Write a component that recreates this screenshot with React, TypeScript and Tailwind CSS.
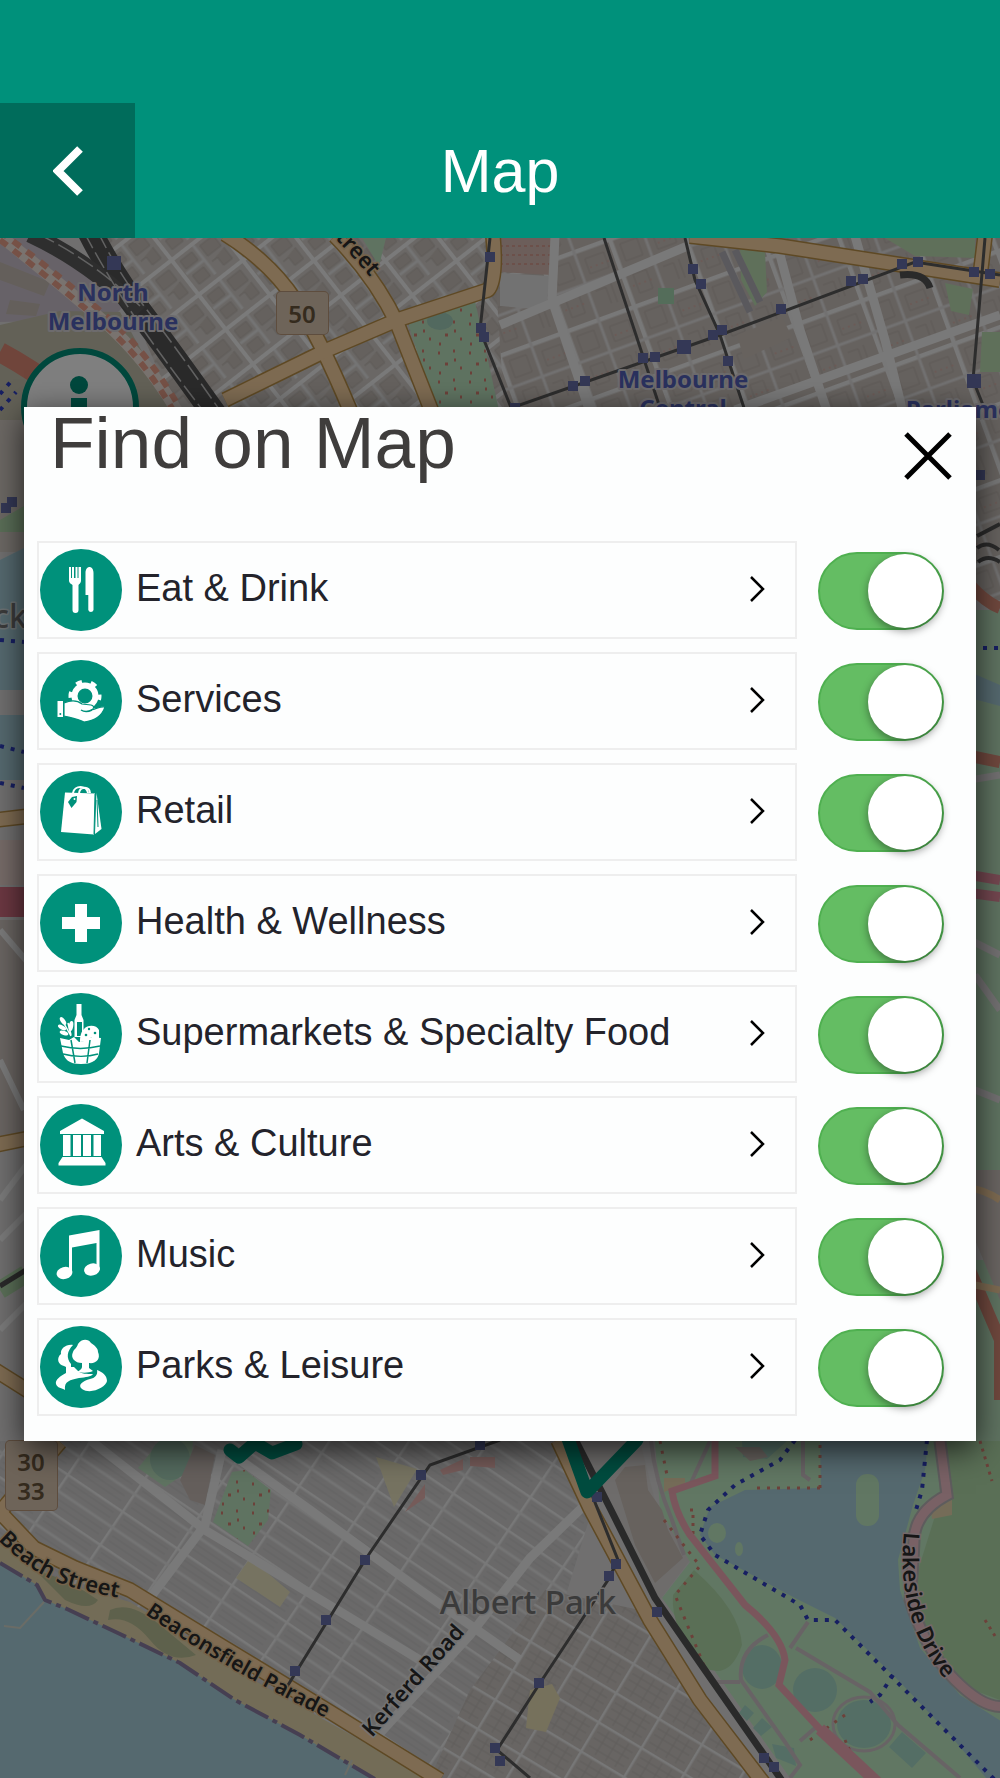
import { useState } from 'react';
import type { ReactNode } from 'react';

interface Category {
  id: string;
  label: string;
  icon: ReactNode;
}

const GREEN = '#00917b';

const categories: Category[] = [
  {
    id: 'eat',
    label: 'Eat & Drink',
    icon: (
      <>
        <path d="M29 18h2v11h1V18h2v11h1.500V18h2v11h1V18h2.500v14c0 2-2 3-2.500 4v25a2.800 2.800 0 0 1-6 0V36c-1-1-3.500-2-3.500-4z" />
        <path d="M45.500 46V24c0-8 8-8 8 0v37a2.700 2.700 0 0 1-5.200 0V46z" />
      </>
    ),
  },
  {
    id: 'services',
    label: 'Services',
    icon: (
      <>
        <circle cx="45" cy="36" r="10.500" fill="none" stroke="#fff" strokeWidth="6" />
        <circle cx="45" cy="36" r="14.500" fill="none" stroke="#fff" strokeWidth="4" strokeDasharray="6 9.180" strokeDashoffset="2" />
        <path d="M24 43c7-3 13-3 18 1l9 1c4 1 3 4 0 5 6-1 9-4 14-3-3 9-11 14-21 15-6-3-12-4-20-6z" stroke={GREEN} strokeWidth="1.200" />
        <path d="M41 50c3 2 7 2 11 0" fill="none" stroke={GREEN} strokeWidth="1.500" />
        <path d="M17.500 41h5.500v16h-5.500z" />
        <circle cx="20.300" cy="54" r="1" fill={GREEN} />
      </>
    ),
  },
  {
    id: 'retail',
    label: 'Retail',
    icon: (
      <>
        <path d="M33 22c1-8 14-8 15 0M39 22c1-7 11-7 11 0" fill="none" stroke="#fff" strokeWidth="2" />
        <path d="M25 21.500l30 1-1 41-33-2.500z" />
        <path d="M56.500 22l5 36-6.500 5z" />
        <path d="M57 29l1 27M55 23l-1 40" fill="none" stroke={GREEN} strokeWidth="1" />
        <path d="M28 31l4-5 5-1-.5 6-5 6z" fill={GREEN} />
        <circle cx="34.500" cy="28" r="1" />
      </>
    ),
  },
  {
    id: 'health',
    label: 'Health & Wellness',
    icon: <path d="M35 22h12v13h13v12H47v13H35V47H22V35h13z" />,
  },
  {
    id: 'food',
    label: 'Supermarkets & Specialty Food',
    icon: (
      <>
        <path d="M36.500 11h5v11l2 5v17h-9V27l2-5z" />
        <path d="M37 29h5v14h-5z" fill={GREEN} />
        <path d="M44 36c4-5 13-4 15 1v9l-19 3c0-6 1-10 4-13z" />
        <g fill={GREEN}>
          <circle cx="49" cy="36" r="1.200" />
          <circle cx="55" cy="40" r="1.300" />
          <circle cx="46" cy="42" r="1.300" />
          <circle cx="51" cy="45" r="1" />
        </g>
        <path d="M31 43L22 27M31 42l-3-12" fill="none" stroke="#fff" strokeWidth="1.500" />
        <ellipse cx="23" cy="28" rx="2.200" ry="4.500" transform="rotate(-35 23 28)" />
        <ellipse cx="22" cy="34.500" rx="2" ry="4.500" transform="rotate(-60 22 34.500)" />
        <ellipse cx="24" cy="40" rx="2" ry="4.500" transform="rotate(-70 24 40)" />
        <ellipse cx="31" cy="33" rx="2.200" ry="5" transform="rotate(10 31 33)" />
        <path d="M20 45l9 2 5-3 5 5 5-1 5-4 12 1-2 15c-1 6-5 11-18 11S25 66 23 60z" />
        <path d="M21 53c12 3 27 3 39 0M23 61c11 3 25 3 35 0M31 47l4 23M50 47l-3 23" fill="none" stroke={GREEN} strokeWidth="1.500" />
      </>
    ),
  },
  {
    id: 'arts',
    label: 'Arts & Culture',
    icon: (
      <path d="M42 14.500L64 27v3H20v-3zM23 31h7.500v21H23zM33 31h8v21h-8zM43 31h8v21h-8zM53.500 31h7.500v21h-7.500zM22.500 53h39l4 6v2.500h-47V59z" />
    ),
  },
  {
    id: 'music',
    label: 'Music',
    icon: (
      <>
        <path d="M29 20.500l30.500-5.500v40h-3V28L32 32.500V58h-3z" />
        <ellipse cx="24.500" cy="58" rx="8" ry="6" transform="rotate(-15 24.500 58)" />
        <ellipse cx="52" cy="54.500" rx="8" ry="6" transform="rotate(-15 52 54.500)" />
      </>
    ),
  },
  {
    id: 'parks',
    label: 'Parks & Leisure',
    icon: (
      <>
        <path d="M33 19c-7-1-13 4-12 9-5 4-3 11 3 12l2 1v6c-6 3-11 7-10 11 1 4 6 4 9 6-1-9 5-10 14-12 7-1 12-1 14-4-6 0-12 0-15-3l-4-4h-3v-3c-5-6-4-13 2-19z" />
        <path d="M33 26c1-3 4-4 5-8 3-5 10-6 13-1 4 3 7 5 7 9 3 7-2 12-9 11v5l4 3c-4 2-10 2-16 1 3-2 5-3 5-5v-4c-7 0-12-5-9-11z" />
        <path d="M57 44c1 5-2 8-7 9-7 2-13 6-8 10 9 6 24-2 25-8 0-6-5-9-10-11z" />
      </>
    ),
  },
];

const stops: [number, number][] = [
  [114, 263], [490, 257], [481, 328], [484, 337], [693, 269], [701, 284], [781, 309], [722, 330],
  [713, 335], [655, 357], [643, 358], [585, 381], [573, 386], [728, 361], [851, 281], [863, 279],
  [902, 264], [918, 262], [974, 272], [990, 274], [515, 408], [980, 475],
  [12, 502], [6, 508], [480, 1445], [421, 1475], [365, 1560], [326, 1620], [295, 1671], [597, 1497],
  [616, 1564], [609, 1576], [657, 1612], [539, 1683], [500, 1761], [764, 1758], [774, 1767], [495, 1748],
];

const trams = [
  'M490 238L480 330L520 430',
  'M604 238L664 420',
  'M685 238L695 280L720 335L748 420',
  'M500 412L720 335L915 262L1000 275',
  'M985 238L973 380L985 410',
  'M500 1440L430 1465L365 1560L285 1690',
  'M590 1490L618 1560L608 1580L540 1683L497 1750L530 1778',
];

const goldRoads = [
  'M225 234Q270 262 295 300T350 410',
  'M335 236Q375 277 397 323L432 412',
  'M225 400L327 350L397 320L488 290Q497 280 493 236',
  'M690 236L780 246L1000 280',
  'M985 236L980 276',
  'M-5 820L30 816M-5 1145L30 1138M-5 1370L30 1392',
  'M-5 1507L34 1548L75 1568L130 1590L220 1645L330 1712L440 1780',
  'M0 1512L60 1442',
  'M558 1440L590 1508L650 1620L700 1700L765 1785',
];

const bigStreets = [
  'M372 1742L470 1635L530 1558L592 1498',
  'M90 1440L205 1530L420 1660',
  'M240 1460L310 1510L420 1590L520 1660',
  'M222 1450L205 1525L150 1598',
  'M775 236L800 330L830 420',
  'M855 236L885 340L905 420',
  'M735 410L1000 315',
  'M555 236L552 300L590 412',
  'M500 325L690 245',
];

const dots = [
  'M795 1440L780 1460L735 1485L708 1510L700 1535L715 1555L800 1605L808 1620L835 1620L900 1685L950 1735L1000 1785',
  'M927 1440L922 1490L916 1510M893 1675L880 1695L870 1702',
  'M0 394L14 378M0 410L16 392',
  'M0 640L24 642M0 746L24 752M0 783L24 788M972 648L1000 648',
];

function StreetMap() {
  return (
    <svg
      className="absolute inset-0 h-full w-full"
      viewBox="0 238 1000 1540"
      preserveAspectRatio="xMidYMin slice"
      aria-hidden="true"
    >
      <defs>
        <pattern id="cbd" width="72" height="72" patternUnits="userSpaceOnUse" patternTransform="translate(607 238) rotate(-20)">
          <rect width="72" height="72" fill="#cdc4be" />
          <path d="M0 0V72M0 0H72" stroke="#f0f0f0" strokeWidth="9" />
          <path d="M36 0V72M0 36H72" stroke="#e4e2e2" strokeWidth="3" />
          <path d="M10 10h18v18h-18zM44 12h20v16h-20zM12 43h14v20h-14zM43 46h11v17M60 44v20" fill="none" stroke="#bdb4ae" />
          <path d="M8 54h22M46 22h20" stroke="#e0aaa0" strokeDasharray="2 4" />
        </pattern>
        <pattern id="north" width="56" height="44" patternUnits="userSpaceOnUse" patternTransform="translate(240 260) rotate(-38)">
          <rect width="56" height="44" fill="#d6d1cc" />
          <path d="M0 0V44M0 0H56" stroke="#f4f4f4" strokeWidth="8" />
          <path d="M28 4V40M5 22H28" stroke="#e8e8e8" strokeWidth="3" />
          <path d="M8 8h15v10h-15zM33 8h17v13h-17zM9 27h14v11h-14zM33 28h7v10h11v-14" fill="#cbc3bc" stroke="#bdb5b0" />
        </pattern>
        <pattern id="south" width="66" height="40" patternUnits="userSpaceOnUse" patternTransform="translate(90 1440) rotate(34)">
          <rect width="66" height="40" fill="#d4d3d3" />
          <path d="M0 0V40M0 0H66" stroke="#f0f0f0" strokeWidth="5" />
          <path d="M0 20H66" stroke="#e8e8e8" strokeWidth="3" />
          <path d="M6 7H60M6 13H60M6 27H60M6 33H60" stroke="#c8c7c7" strokeWidth="1" />
        </pattern>
        <pattern id="east" width="50" height="34" patternUnits="userSpaceOnUse" patternTransform="translate(530 1640) rotate(31)">
          <rect width="50" height="34" fill="#d0cbc7" />
          <path d="M0 0V34M0 0H50" stroke="#eee" strokeWidth="5" />
          <path d="M5 17H46M5 10H46M5 26H46M15 4V31M27 4V31M38 4V31" stroke="#c0bbb7" strokeWidth="1" />
        </pattern>
        <pattern id="trees" width="31" height="29" patternUnits="userSpaceOnUse">
          <path d="M4 5h2M19 3h2M11 16h3M26 20h2M5 25h2M20 12h2" stroke="#d98374" strokeWidth="3" />
        </pattern>
        <path id="beach" d="M-2 1540Q30 1572 60 1583T135 1600" />
        <path id="beacon" d="M145 1614Q200 1652 260 1684T355 1732" />
        <path id="kerferd" d="M372 1738L482 1614" />
        <path id="street" d="M326 230Q356 258 390 302" />
        <path id="lakeside" d="M904 1532Q898 1590 918 1636T985 1715" />
      </defs>

      {/* land */}
      <rect y="238" width="1000" height="1540" fill="#e0dfdf" />
      <path d="M100 238H500L520 420H180z" fill="url(#north)" />
      <path d="M493 238H1000V600H530L505 420z" fill="url(#cbd)" />
      <path d="M0 238H30L130 300L110 320L0 322z" fill="#cfc5d0" />
      <path d="M0 262l50 20-6 14-44-16zM10 300l30 4-4 12-30-2z" fill="#c8beb6" />
      <path d="M0 325L60 311L120 312L180 420H0z" fill="#c6c3ae" />
      <path d="M408 323L475 301L500 415H437zM362 238H386L379 266z" fill="#bfe6c3" />
      <path d="M408 323L475 301L500 415H437z" fill="url(#trees)" />
      <ellipse cx="440" cy="321" rx="13" ry="9" fill="#a5d2be" />
      <path d="M500 238H556L552 275L500 272z" fill="#d8bdb4" />
      <path d="M500 246H554M500 255H553M500 264H552" stroke="#d98374" strokeDasharray="3 3" />
      <path d="M500 273L550 276L546 310L500 306z" fill="#e4e4e4" />
      <path d="M740 244l25 8 2 40-12 14-14-26zM885 238h90v20l-60-2zM945 283l28 6-4 26-18-4zM982 332h18v40h-20z" fill="#bfe0b5" />
      <path d="M735 250l25 52M722 252l28 60" stroke="#b5b3bb" strokeWidth="7" />
      <path d="M737 335l45-18 10 20-48 22z" fill="#cfc5bd" />
      <path d="M658 288h16v16h-16z" fill="#a9dab5" />

      {/* strips left and right of the dialog */}
      <path d="M0 420H24V552H0z" fill="#d9d0c9" />
      <path d="M0 520l24-14v26H0z" fill="#b4dcae" />
      <path d="M0 560L24 548V690H0zM0 715H24V780H0z" fill="#aad3df" />
      <path d="M0 840H24V885H0z" fill="#edd6d0" />
      <path d="M0 887H26V917H0z" fill="#d97084" />
      <path d="M0 920H24V1140H0z" fill="#d4cbc5" />
      <path d="M0 930L30 965M0 1060L24 1110M0 1200L30 1160M0 1240L30 1210M0 1330L30 1300" stroke="#f6f6f6" strokeWidth="6" />
      <path d="M0 1290L26 1274" stroke="#b6e0b0" strokeWidth="18" />
      <path d="M0 1286L26 1270" stroke="#555" strokeWidth="5" />
      <path d="M970 610H1000V1170H970zM970 1260H1000V1450H970z" fill="#bfe6c3" />
      <path d="M970 672L1000 685V706L970 698z" fill="#aad3df" />
      <path d="M970 585Q985 602 1000 608M970 756L1000 762M970 1270L1000 1340V1400" fill="none" stroke="#e0907c" strokeWidth="12" />
      <path d="M970 875L1000 880M970 893L1000 897" stroke="#e88fa0" strokeWidth="10" />
      <path d="M970 780L1000 775M970 940L1000 955M975 975L1000 1010M975 1090L1000 1100" stroke="#e7e2e4" strokeWidth="7" />
      <path d="M975 1170H1000V1300L975 1240z" fill="#d4cbc5" />
      <path d="M970 1188Q985 1190 1000 1200M975 1285L1000 1290" fill="none" stroke="#fcd6a4" strokeWidth="7" />

      {/* south side */}
      <path d="M0 1441H560L592 1510L540 1680L500 1778H0z" fill="url(#south)" />
      <path d="M470 1690L545 1590L640 1610L765 1778H430z" fill="url(#east)" />
      <path d="M160 1441H193L190 1470L165 1487L138 1468zM232 1472L245 1470L271 1490L268 1520L248 1546L213 1522z" fill="#bfe6c3" />
      <path d="M232 1472L245 1470L271 1490L268 1520L248 1546L213 1522z" fill="url(#trees)" />
      <ellipse cx="170" cy="1459" rx="20" ry="21" fill="#a8d4bd" />
      <path d="M376 1457L417 1469L394 1507zM250 1558L290 1592L280 1607L236 1578z" fill="#ece7c3" />
      <path d="M440 1470L463 1459V1470L443 1475zM470 1457H495V1468L470 1466zM405 1512L425 1484V1498z" fill="#ebb7b3" />
      <path d="M195 1445L215 1455L205 1505L190 1500L180 1480z" fill="#cbbfb9" />
      <path d="M40 1690l22-6 8 14-14 34-20-4z" transform="translate(490 0)" fill="#ece2b8" />
      <path d="M0 1540L60 1582L130 1602L250 1678L440 1785H0z" fill="#e6d9ae" />
      <path d="M110 1610Q130 1600 160 1625T196 1655Q170 1665 150 1640T108 1620zM35 1570Q70 1580 98 1600Q90 1612 65 1600z" fill="#bcc298" />
      <path d="M0 1563L37 1585L45 1600L67 1609L120 1634L180 1663L235 1700L300 1735L385 1785H0z" fill="#aad3df" />
      <path d="M0 1563L37 1585L45 1600L67 1609L120 1634L180 1663L235 1700L300 1735L385 1785" fill="none" stroke="#8d7fa5" strokeWidth="4" strokeDasharray="26 5 5 5" />
      <path d="M4 1626L20 1628L44 1602M345 1775L352 1760" fill="none" stroke="#d5d8cd" strokeWidth="2" />

      {/* park and lake */}
      <path d="M580 1441L640 1441L655 1500L690 1560L660 1600L600 1490z" fill="#dcd9d7" />
      <path d="M655 1441H1000V1778H790L700 1650L662 1598L690 1562L660 1510z" fill="#c3eec6" />
      <path d="M615 1480L625 1467L645 1465L648 1490L662 1510L668 1530L683 1558L655 1583L635 1545z" fill="#cfc4bc" />
      <path d="M938 1441H1000V1700L960 1685L925 1640L915 1580L940 1500z" fill="#b4dfad" />
      <path d="M694 1570Q740 1610 742 1645Q730 1680 705 1668Q670 1630 673 1595z" fill="#b4dfad" />
      <path d="M820 1441L821 1488L745 1490L710 1507L700 1535L715 1555L795 1598L835 1618L900 1682L950 1735L992 1785H1010V1727L960 1695L920 1648L900 1590L898 1560L913 1505L925 1470L928 1441z" fill="#aad3df" />
      <rect x="856" y="1474" width="23" height="52" rx="11" fill="#c3eec6" />
      <ellipse cx="717" cy="1533" rx="9" ry="10" fill="#c3eec6" />
      <ellipse cx="739" cy="1549" rx="4" ry="7" fill="#c3eec6" />
      <g fill="#a9dccb">
        <ellipse cx="762" cy="1667" rx="20" ry="22" />
        <circle cx="815" cy="1690" r="22" />
        <ellipse cx="864" cy="1724" rx="27" ry="24" />
        <path d="M902 1732L926 1753L912 1768L889 1747zM745 1705l9 8-7 8-8-8zM762 1718l10 9-11 9-8-8zM772 1744l22 4 2 18-20-8zM742 1441h45l-20 18-24-2z" />
      </g>
      <path d="M735 1447h25l8 10-18 4z" fill="#cfc4bc" />
      <path d="M664 1478H685V1484L664 1492zM930 1505L952 1500V1515L932 1519z" fill="#ead9b0" />
      <path d="M768 1635Q738 1650 741 1680L785 1742L800 1765L790 1778M796 1648L870 1692L898 1725L960 1778M808 1622L790 1648M716 1682H740M800 1741L815 1728M651 1441Q655 1480 672 1520L684 1555M803 1441V1475L810 1480M710 1441L690 1485" fill="none" stroke="#d0c7ca" strokeWidth="4" />
      <ellipse cx="864" cy="1724" rx="31" ry="27" fill="none" stroke="#d0c7ca" strokeWidth="3" />
      <path d="M820 1488H750M820 1488V1441M664 1520L700 1566L675 1595L710 1680L735 1710M660 1441L668 1480M845 1715L810 1740" fill="none" stroke="#d98374" strokeWidth="3" strokeDasharray="3 7" />
      <path d="M690 1510h3v30M980 1441l12 40M845 1740l8 18M985 1620l10 16" fill="none" stroke="#d98374" strokeWidth="3" strokeDasharray="3 5" />

      {/* streets */}
      <g fill="none" stroke="#f2f2f2" strokeWidth="9">
        {bigStreets.map((d) => (
          <path key={d} d={d} />
        ))}
      </g>
      <path d="M0 352Q30 368 62 392" fill="none" stroke="#e08a77" strokeWidth="20" />
      <path d="M0 236Q50 275 100 318T185 425" fill="none" stroke="#f3e6df" strokeWidth="12" />
      <path d="M0 240Q50 278 100 321T181 425" fill="none" stroke="#eda28c" strokeWidth="6" strokeDasharray="9 8" />
      <path d="M6 236Q54 271 104 314T189 425" fill="none" stroke="#eda28c" strokeWidth="6" strokeDasharray="9 8" strokeDashoffset="8" />
      <path d="M90 232Q112 275 140 312T222 425" fill="none" stroke="#545454" strokeWidth="25" />
      <path d="M30 234Q90 262 140 312" fill="none" stroke="#5c5c5c" strokeWidth="17" />
      <path d="M84 232Q108 277 134 316T214 425M98 232Q118 273 147 310T230 425M38 234Q92 260 140 306" fill="none" stroke="#c4c4c4" strokeWidth="1.500" strokeDasharray="18 5" />
      <g fill="none" strokeLinejoin="round">
        {goldRoads.map((d) => (
          <path key={d} d={d} stroke="#bd9249" strokeWidth="16" />
        ))}
        {goldRoads.map((d) => (
          <path key={d} d={d} stroke="#fcd6a4" strokeWidth="13" />
        ))}
      </g>
      <path d="M715 1441V1476L672 1491Q675 1512 690 1535L745 1605Q782 1635 785 1660L779 1685L830 1740L880 1785" fill="none" stroke="#f5acb9" strokeWidth="7" />
      <path d="M820 1729L880 1785" stroke="#f5acb9" strokeWidth="12" />
      <path d="M940 1441L947 1495Q915 1512 914 1540T910 1600Q925 1650 955 1680T1005 1706" fill="none" stroke="#bcb8ba" strokeWidth="13" />
      <path d="M940 1441L947 1495Q915 1512 914 1540T910 1600Q925 1650 955 1680T1005 1706" fill="none" stroke="#f3c2cb" strokeWidth="9" />
      <path d="M576 1441L612 1512L655 1598L700 1663L785 1785" fill="none" stroke="#555" strokeWidth="7" />
      <g fill="none" stroke="#5a5a5a" strokeWidth="3">
        {trams.map((d) => (
          <path key={d} d={d} />
        ))}
      </g>
      <path d="M900 275Q925 272 930 288" fill="none" stroke="#555" strokeWidth="7" />
      <path d="M977 548q10-8 22 2M978 562q10-8 22 0M977 536L1000 524" fill="none" stroke="#555" strokeWidth="4" />
      <g fill="none" stroke="#2f3fc4" strokeWidth="4" strokeDasharray="4 7">
        {dots.map((d) => (
          <path key={d} d={d} />
        ))}
      </g>
      <g fill="#6870ad">
        {stops.map(([x, y]) => (
          <rect key={`${x}-${y}`} x={x - 5} y={y - 5} width="10" height="10" />
        ))}
        <rect x="107" y="256" width="14" height="14" />
        <rect x="677" y="340" width="14" height="14" />
        <rect x="967" y="374" width="14" height="14" />
      </g>

      {/* trail outline */}
      <g fill="none" stroke="#00997f" strokeWidth="13" strokeLinejoin="round" strokeLinecap="round">
        <path d="M567 1436L587 1492L637 1440" />
        <path d="M230 1450L239 1457L255 1443L272 1453L296 1444" />
      </g>

      {/* labels */}
      <g fontFamily="'Noto Sans', sans-serif" textAnchor="middle" paintOrder="stroke" strokeLinejoin="round">
        <g fontSize="24" fontWeight="700" fill="#5563bd" stroke="#dad7da" strokeWidth="4">
          <text x="113" y="301">North</text>
          <text x="113" y="330">Melbourne</text>
          <text x="683" y="388">Melbourne</text>
          <text x="683" y="417">Central</text>
          <text x="972" y="418">Parliament</text>
        </g>
        <g fill="#dcc8b2" stroke="#bd9a7c" strokeWidth="2">
          <rect x="277" y="292" width="51" height="42" rx="4" />
          <rect x="6" y="1441" width="51" height="69" rx="4" />
        </g>
        <g fontSize="24" fontWeight="600" fill="#6a563c">
          <text x="302" y="323">50</text>
          <text x="31" y="1471">30</text>
          <text x="31" y="1500">33</text>
        </g>
        <text x="528" y="1614" fontSize="33" fontWeight="500" fill="#777" stroke="#e0dfdf" strokeWidth="3">Albert Park</text>
        <text x="10" y="628" fontSize="32" fontWeight="500" fill="#777" stroke="#d7e3e6" strokeWidth="3">ck</text>
      </g>
      <g fontFamily="'Noto Sans', sans-serif" fontSize="22" fontWeight="600" fill="#2c2c2c" paintOrder="stroke" stroke="#eac796" strokeWidth="3">
        <text><textPath href="#beach">Beach Street</textPath></text>
        <text fontSize="21"><textPath href="#beacon">Beaconsfield Parade</textPath></text>
        <text><textPath href="#street">Street</textPath></text>
        <text stroke="#e6e6e6"><textPath href="#kerferd">Kerferd Road</textPath></text>
        <text stroke="#e8cfd3"><textPath href="#lakeside">Lakeside Drive</textPath></text>
      </g>
    </svg>
  );
}

export default function App() {
  const [enabled, setEnabled] = useState<Record<string, boolean>>(
    Object.fromEntries(categories.map((c) => [c.id, true]))
  );
  const [isOpen, setIsOpen] = useState(true);

  const toggle = (id: string) => {
    setEnabled((prev) => ({ ...prev, [id]: !prev[id] }));
  };

  return (
    <div className="flex min-h-screen flex-col font-['Liberation_Sans',sans-serif]">
      <header className="grid grid-cols-[135px_1fr_135px] bg-[#00917b] pt-[103px]">
        <button aria-label="Back" className="flex h-[135px] items-center justify-center bg-[#006c5b]">
          <svg width="30" height="50" viewBox="0 0 30 50" fill="none">
            <path d="M27 3L5 25L27 47" stroke="#fff" strokeWidth="8" />
          </svg>
        </button>
        <h1 className="self-center pt-0.5 text-center text-[61px] leading-none text-white">Map</h1>
      </header>

      <main className="relative flex-1 overflow-hidden">
        <StreetMap />
        <button
          aria-label="Information"
          className="absolute top-[110px] left-[21px] flex h-[118px] w-[118px] items-start justify-center rounded-full border-[6px] border-[#00917b] bg-white pt-[22px]"
        >
          <svg width="20" height="70" viewBox="0 0 20 70" fill="#00917b">
            <circle cx="9" cy="9" r="9" />
            <path d="M1 22h16v40H1z" />
          </svg>
        </button>
        <div className="absolute inset-0 bg-black/50" />

        {isOpen && (
          <section
            role="dialog"
            aria-labelledby="dialog-title"
            className="relative mx-6 mt-[169px] mb-12 bg-[#fdfefe] pb-[25px] shadow-[0_8px_30px_rgba(0,0,0,0.7)]"
          >
            <div className="flex h-[134px] items-start justify-between pr-5 pl-[26px]">
              <h2 id="dialog-title" className="text-[73px] leading-[72px] text-[#3f3d3c]">
                Find on Map
              </h2>
              <button aria-label="Close" onClick={() => setIsOpen(false)} className="mt-[21px] p-1">
                <svg width="48" height="48" viewBox="0 0 48 48" fill="none">
                  <path d="M2 2L46 46M46 2L2 46" stroke="#000" strokeWidth="5" />
                </svg>
              </button>
            </div>

            <ul className="flex flex-col gap-[13px] pr-8 pl-[13px]">
              {categories.map((category) => (
                <li key={category.id} className="flex items-center gap-[21px]">
                  <button className="flex h-[98px] flex-1 items-center border-2 border-[#eeeeee] pr-[30px] pl-px text-left">
                    <svg className="shrink-0" width="82" height="82" viewBox="0 0 82 82" fill="#fff">
                      <circle cx="41" cy="41" r="41" fill={GREEN} />
                      {category.icon}
                    </svg>
                    <span id={category.id} className="flex-1 pb-1 pl-[14px] text-[38px] leading-[44px] text-[#23232b]">
                      {category.label}
                    </span>
                    <svg width="15" height="28" viewBox="0 0 15 28" fill="none">
                      <path d="M1 1L13 13L1 25" stroke="#000" strokeWidth="2.500" />
                    </svg>
                  </button>
                  <input
                    type="checkbox"
                    role="switch"
                    aria-labelledby={category.id}
                    checked={enabled[category.id]}
                    onChange={() => toggle(category.id)}
                    className="mt-0.5 h-[78px] w-[126px] shrink-0 cursor-pointer appearance-none rounded-full border-2 border-[#dfdfdf] bg-white before:block before:h-[74px] before:w-[74px] before:rounded-full before:bg-white before:shadow-[0_3px_8px_rgba(0,0,0,0.4)] checked:border-[#4fb050] checked:bg-[#64bd63] checked:before:translate-x-12"
                  />
                </li>
              ))}
            </ul>
          </section>
        )}
      </main>
    </div>
  );
}
